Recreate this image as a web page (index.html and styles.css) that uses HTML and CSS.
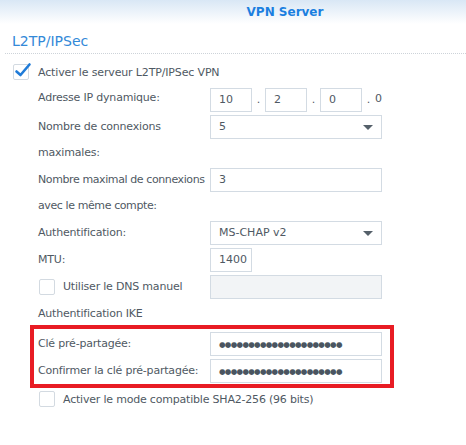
FILE: index.html
```html
<!DOCTYPE html>
<html lang="fr">
<head>
    <meta charset="UTF-8">
    <meta name="viewport" content="width=device-width, initial-scale=1.0">
    <title>VPN Server</title>
    <link rel="stylesheet" href="styles.css">
</head>
<body>

<div class="titlebar"><span>VPN Server</span></div>

<div class="panel">
    <h2 class="section-title">L2TP/IPSec</h2>

    <!-- activation -->
    <div class="check-main">
        <span class="box checked">
            <svg viewBox="0 0 18 16" width="18" height="16"><path d="M2.5 8.5 L6.5 12 L15.5 1.5" fill="none" stroke="#1f7bd8" stroke-width="2.6" stroke-linecap="round" stroke-linejoin="round"/></svg>
        </span>
        Activer le serveur L2TP/IPSec VPN
    </div>

    <div class="form">
        <div class="row">
            <div class="label">Adresse IP dynamique:</div>
            <div class="ip">
                <div class="field small">10</div>
                <span class="sep">.</span>
                <div class="field small">2</div>
                <span class="sep">.</span>
                <div class="field small">0</div>
                <span class="sep">.</span>
                <span class="last">0</span>
            </div>
        </div>

        <div class="row">
            <div class="label">Nombre de connexions<br>maximales:</div>
            <div class="field select">5<span class="arrow"></span></div>
        </div>

        <div class="row">
            <div class="label tight">Nombre maximal de connexions<br>avec le même compte:</div>
            <div class="field">3</div>
        </div>

        <div class="row">
            <div class="label">Authentification:</div>
            <div class="field select">MS-CHAP v2<span class="arrow"></span></div>
        </div>

        <div class="row">
            <div class="label">MTU:</div>
            <div class="field small">1400</div>
        </div>

        <div class="row">
            <div class="label sub-check"><span class="box"></span>Utiliser le DNS manuel</div>
            <div class="field disabled"></div>
        </div>

        <div class="row ike">
            <div class="label">Authentification IKE</div>
        </div>

        <!-- clé pré-partagée -->
        <div class="highlight">
            <div class="row">
                <div class="label">Clé pré-partagée:</div>
                <div class="field"><span class="dots">●●●●●●●●●●●●●●●●●●●●●</span></div>
            </div>
            <div class="row">
                <div class="label">Confirmer la clé pré-partagée:</div>
                <div class="field"><span class="dots">●●●●●●●●●●●●●●●●●●●●●</span></div>
            </div>
        </div>

        <div class="row sha">
            <div class="sub-check"><span class="box"></span>Activer le mode compatible SHA2-256 (96 bits)</div>
        </div>
    </div>
</div>

</body>
</html>
```

FILE: styles.css
```css
body {
    margin: 0;
    font-family: "DejaVu Sans", Verdana, sans-serif;
    font-size: 11px;
    color: #4f5963;
    background-color: white;
}
.titlebar {
    height: 24px;
    line-height: 24px;
    padding-left: 104px;
    text-align: center;
    background: linear-gradient(#d9e7f5, #ffffff);
    color: #1b7fe0;
    font-weight: bold;
    font-size: 12px;
}
.section-title {
    margin: 0 0 0 5px;
    padding: 7px 0 1px 7px;
    font-size: 14px;
    font-weight: normal;
    line-height: 21px;
    color: #3389d8;
    border-bottom: 1px dotted #cdd3d9;
}
.check-main {
    display: flex;
    align-items: center;
    height: 26px;
    margin-top: 5px;
    letter-spacing: -0.15px;
}
.box {
    width: 16px;
    height: 16px;
    box-sizing: border-box;
    border: 1px solid #d3dae1;
    border-radius: 2px;
    background-color: white;
    flex: none;
    position: relative;
}
.check-main .box {
    margin: 0 9px 0 13px;
}
.box svg {
    position: absolute;
    left: 0;
    top: -2px;
    overflow: visible;
}
.form {
    display: flex;
    flex-direction: column;
    gap: 1px;
    padding-left: 38px;
}
.row {
    display: flex;
    align-items: flex-start;
}
.label, .sub-check {
    letter-spacing: -0.2px;
}
.label {
    width: 172px;
    flex: none;
    line-height: 26px;
    white-space: nowrap;
}
.label.tight {
    letter-spacing: -0.4px;
}
.field {
    width: 172px;
    height: 24px;
    margin-top: 1px;
    box-sizing: border-box;
    border: 1px solid #d3dbe3;
    padding: 0 8px;
    line-height: 22px;
    background-color: white;
    color: #4f5963;
}
.field.small {
    width: 42px;
}
.field.disabled {
    background-color: #f2f4f6;
}
.ip {
    display: flex;
    align-items: center;
}
.sep {
    width: 13px;
    text-align: center;
    line-height: 26px;
    padding-top: 2px;
}
.last {
    line-height: 26px;
}
.select {
    display: flex;
    justify-content: space-between;
    align-items: center;
}
.arrow {
    width: 0;
    height: 0;
    border-left: 5px solid transparent;
    border-right: 5px solid transparent;
    border-top: 5px solid #55606a;
}
.sub-check {
    display: flex;
    align-items: center;
    white-space: nowrap;
}
.sub-check .box {
    margin: 0 8px 0 1px;
}
.ike .label {
    line-height: 21px;
    padding-top: 2px;
}
.highlight {
    display: flex;
    flex-direction: column;
    gap: 1px;
    width: 350px;
    margin-left: -8px;
    padding: 2px 2px 0 4px;
    border: 4px solid #e81c24;
}
.dots {
    font-size: 7.5px;
    color: #4a5560;
    letter-spacing: -0.7px;
}
.sha .sub-check {
    height: 20px;
}
```
